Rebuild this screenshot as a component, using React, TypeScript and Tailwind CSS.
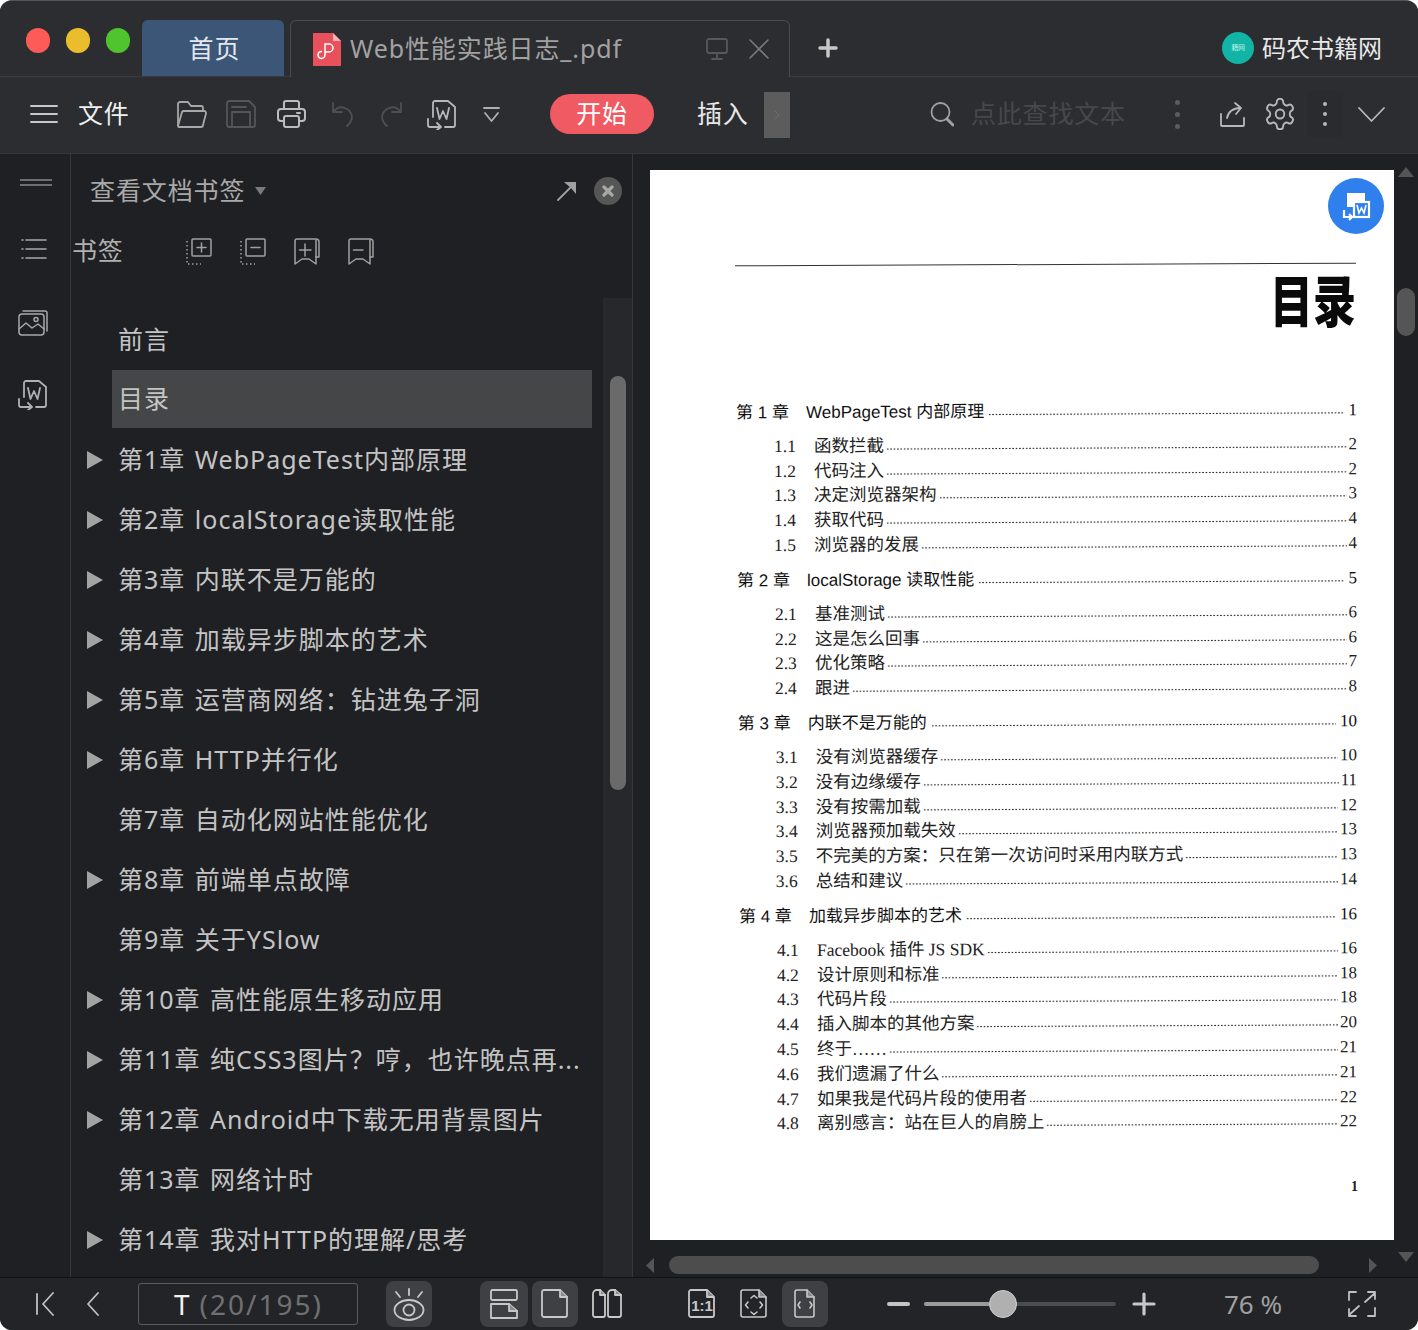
import React from "react";

const FONT = '"Noto Sans","Noto Sans CJK SC",sans-serif';

const S = ({ w, h, vb, children, c = "#b8b8b8", sw = 1.8 }: { w: number; h: number; vb?: string; children: React.ReactNode; c?: string; sw?: number }) => (
  <svg width={w} height={h} viewBox={vb ?? `0 0 ${w} ${h}`} fill="none" stroke={c} strokeWidth={sw} strokeLinecap="round" strokeLinejoin="round" className="shrink-0 block">
    {children}
  </svg>
);

const Tri = () => (
  <svg width="16" height="18" viewBox="0 0 16 18" className="shrink-0"><path d="M0 0L16 9L0 18Z" fill="#a3a3a3" /></svg>
);

const WordDoc = ({ c = "#b8b8b8" }: { c?: string }) => (
  <S w={32} h={32} c={c}>
    <path d="M7 19V5a2 2 0 0 1 2-2h13l7 6v18a2 2 0 0 1-2 2h-8" />
    <path d="M11 10l2.500 11 3.500-8 3.500 8L23 10" />
    <path d="M2 21v6a2 2 0 0 0 2 2h11M11 25l4 4-4 3" />
  </S>
);

const DocShape = ({ w, h }: { w: number; h: number }) => (
  <>
    <path d={`M1 3a2 2 0 0 1 2-2h${w - 11}l7 7v${h - 11}a2 2 0 0 1-2 2H3a2 2 0 0 1-2-2z`} />
    <path d={`M${w - 8} 1v7h7`} fill="#8a8a8a" />
  </>
);

const sections: { n: string; t: string; p: string; subs: [string, string, string][] }[] = [
  { n: "第 1 章", t: "WebPageTest 内部原理", p: "1", subs: [["1.1", "函数拦截", "2"], ["1.2", "代码注入", "2"], ["1.3", "决定浏览器架构", "3"], ["1.4", "获取代码", "4"], ["1.5", "浏览器的发展", "4"]] },
  { n: "第 2 章", t: "localStorage 读取性能", p: "5", subs: [["2.1", "基准测试", "6"], ["2.2", "这是怎么回事", "6"], ["2.3", "优化策略", "7"], ["2.4", "跟进", "8"]] },
  { n: "第 3 章", t: "内联不是万能的", p: "10", subs: [["3.1", "没有浏览器缓存", "10"], ["3.2", "没有边缘缓存", "11"], ["3.3", "没有按需加载", "12"], ["3.4", "浏览器预加载失效", "13"], ["3.5", "不完美的方案：只在第一次访问时采用内联方式", "13"], ["3.6", "总结和建议", "14"]] },
  { n: "第 4 章", t: "加载异步脚本的艺术", p: "16", subs: [["4.1", "Facebook 插件 JS SDK", "16"], ["4.2", "设计原则和标准", "18"], ["4.3", "代码片段", "18"], ["4.4", "插入脚本的其他方案", "20"], ["4.5", "终于……", "21"], ["4.6", "我们遗漏了什么", "21"], ["4.7", "如果我是代码片段的使用者", "22"], ["4.8", "离别感言：站在巨人的肩膀上", "22"]] },
];

const bookmarks: [string, boolean][] = [
  ["第1章 WebPageTest内部原理", true],
  ["第2章 localStorage读取性能", true],
  ["第3章 内联不是万能的", true],
  ["第4章 加载异步脚本的艺术", true],
  ["第5章 运营商网络：钻进兔子洞", true],
  ["第6章 HTTP并行化", true],
  ["第7章 自动化网站性能优化", false],
  ["第8章 前端单点故障", true],
  ["第9章 关于YSlow", false],
  ["第10章 高性能原生移动应用", true],
  ["第11章 纯CSS3图片？哼，也许晚点再...", true],
  ["第12章 Android中下载无用背景图片", true],
  ["第13章 网络计时", false],
  ["第14章 我对HTTP的理解/思考", true],
];

const Dots = ({ cls }: { cls: string }) => (
  <span className={`flex-1 h-[3px] bg-[radial-gradient(circle,#2a2a2a_0.8px,transparent_1.1px)] bg-[length:3.4px_3px] ${cls}`} />
);

function Toc() {
  let y = 0;
  return (
    <div className="mt-[72px] mr-[37px] skew-y-[-0.28deg]" style={{ fontFamily: '"Liberation Sans","Noto Sans CJK SC",sans-serif' }}>
      {sections.map((s, i) => {
        const rows = (
          <div key={s.n} className={i ? "mt-[10px]" : ""}>
            <div className="flex items-end h-[25px] mb-[9px] text-[17px] leading-[25px] text-[#111]" style={{ marginLeft: 86 + y * 0.0059 }}>
              <span className="w-[70px] shrink-0 whitespace-pre">{s.n}</span>
              <span className="whitespace-nowrap">{s.t}</span>
              <Dots cls="mx-[4px] mb-[8px]" />
              <span className="font-['Liberation_Serif'] text-[17px]">{s.p}</span>
            </div>
            {s.subs.map((r) => (
              <div key={r[0]} className="flex items-end h-[24.8px] text-[17.5px] leading-[25px] text-[#222]" style={{ marginLeft: 124 + y * 0.0059, fontFamily: '"Liberation Serif","Noto Sans CJK SC",serif' }}>
                <span className="w-[40px] shrink-0">{r[0]}</span>
                <span className="whitespace-nowrap">{r[1]}</span>
                <Dots cls="mx-[2px] mb-[8px]" />
                <span className="text-[17px]">{r[2]}</span>
              </div>
            ))}
          </div>
        );
        y += 34 + s.subs.length * 24.8 + 10;
        return rows;
      })}
    </div>
  );
}

export default function App() {
  return (
    <div className="w-[1418px] h-[1330px] bg-white overflow-hidden" style={{ fontFamily: FONT }}>
      <div className="w-full h-full rounded-[12px] overflow-hidden flex flex-col bg-[#1f2023] border-t border-[#55565a]">
        {/* title bar */}
        <div className="h-[76px] shrink-0 bg-[#2c2d30] flex items-end border-b border-[#3a3b3e]">
          <div className="flex items-center gap-[16px] pl-[26px] pb-[23px] w-[142px]">
            <span className="w-[24px] h-[25px] rounded-full bg-[#fc5b57]" />
            <span className="w-[24px] h-[25px] rounded-full bg-[#e9bd2b]" />
            <span className="w-[24px] h-[25px] rounded-full bg-[#4fc42f]" />
          </div>
          <div className="w-[142px] h-[56px] bg-[#3c5678] rounded-t-[6px] flex items-center justify-center pt-[2px] pl-[3px] text-[25px] tracking-[1px] text-[#e4e8ee]">首页</div>
          <div className="ml-[6px] w-[500px] h-[57px] rounded-t-[6px] border border-b-0 border-[#4a4b4e] flex items-center pl-[22px] -mb-px bg-[#2c2d30]">
            <svg width="28" height="33" viewBox="0 0 28 33" className="shrink-0">
              <path d="M0 0H20L28 8V33H0Z" fill="#e8505b" />
              <path d="M20 0L28 8H20Z" fill="#f6b3b6" />
              <path d="M12 22V11h4a4 4 0 0 1 0 8h-4M12 22a3.500 3.500 0 1 1-3-3.500" fill="none" stroke="#fff" strokeWidth="1.500" />
            </svg>
            <span className="ml-[9px] w-[356px] text-[25px] text-[#a2a2a2] whitespace-nowrap tracking-[0.9px]">Web性能实践日志_.pdf</span>
            <S w={22} h={22} c="#57585b">
              <rect x="1" y="1" width="20" height="14" rx="2" />
              <path d="M11 15v6M6 21h10" />
            </S>
            <div className="ml-[20px]">
              <S w={22} h={22} c="#77787a" sw={1.6}>
                <path d="M2 2l18 18M20 2L2 20" />
              </S>
            </div>
          </div>
          <div className="ml-[28px] pb-[18px]">
            <S w={20} h={20} c="#c8c8c8" sw={3.5}>
              <path d="M10 2v16M2 10h16" />
            </S>
          </div>
          <div className="ml-auto mr-[36px] pb-[12px] flex items-center">
            <span className="w-[32px] h-[32px] rounded-full bg-[#12b5a5] flex items-center justify-center text-[7px] text-[#bff0ea] tracking-[-0.5px]">籍网</span>
            <span className="ml-[8px] text-[24px] leading-[32px] text-[#e8e8e8] whitespace-nowrap">码农书籍网</span>
          </div>
        </div>

        {/* toolbar */}
        <div className="h-[77px] shrink-0 bg-[#2c2d30] flex items-center pb-[2px] border-b border-[#35363a] text-[25px] tracking-[0.8px]">
          <div className="ml-[30px]">
            <S w={28} h={20} c="#c8c8c8">
              <path d="M1 2h26M1 10h26M1 18h26" />
            </S>
          </div>
          <span className="ml-[20px] w-[52px] text-[#f0f0f0] whitespace-nowrap">文件</span>
          <div className="ml-[45px]">
            <S w={33} h={28} c="#a8a8a8">
              <path d="M3 25V4a2 2 0 0 1 2-2h8l3 4h10a2 2 0 0 1 2 2v3" />
              <path d="M3 26l4-14a2 2 0 0 1 2-1h20a2 2 0 0 1 2 2.500L28 25a2 2 0 0 1-2 2H4a1 1 0 0 1-1-1z" />
            </S>
          </div>
          <div className="ml-[17px]">
            <S w={32} h={30} c="#55565a">
              <path d="M2 26V4a2 2 0 0 1 2-2h20l6 6v18a2 2 0 0 1-2 2H4a2 2 0 0 1-2-2z" />
              <path d="M7 28V13h18v15M7 8h14" />
            </S>
          </div>
          <div className="ml-[20px]">
            <S w={29} h={28} c="#bcbcbc" sw={2}>
              <path d="M7 9V3a2 2 0 0 1 2-2h11a2 2 0 0 1 2 2v6" />
              <path d="M7 21H4a3 3 0 0 1-3-3v-6a3 3 0 0 1 3-3h21a3 3 0 0 1 3 3v6a3 3 0 0 1-3 3h-3" />
              <rect x="7" y="16" width="15" height="11" rx="2" />
              <path d="M20 13h3" />
            </S>
          </div>
          <div className="ml-[25px]">
            <S w={24} h={26} c="#4e4f52">
              <path d="M2 2v9h9M2 11c4-5 9-6 14-3 6 4 7 11 0 17" />
            </S>
          </div>
          <div className="ml-[24px]">
            <S w={24} h={26} c="#4e4f52">
              <path d="M22 2v9h-9M22 11c-4-5-9-6-14-3-6 4-7 11 0 17" />
            </S>
          </div>
          <div className="ml-[23px]">
            <WordDoc />
          </div>
          <div className="ml-[25px]">
            <S w={17} h={17} c="#b0b0b0">
              <path d="M1 2h15M2 7l6.500 8L15 7" />
            </S>
          </div>
          <div className="ml-[50px] w-[104px] h-[40px] rounded-full bg-[#f05a62] flex items-center justify-center text-[#fff]">开始</div>
          <span className="ml-[43px] w-[51px] text-[#e8e8e8] whitespace-nowrap">插入</span>
          <div className="ml-[16px] mt-[2px] w-[26px] h-[46px] bg-[#5c5c5c] flex items-center justify-center">
            <S w={6} h={10} c="#6e6e6e" sw={1}>
              <path d="M1 1l4 4-4 4" />
            </S>
          </div>
          <div className="ml-[140px]">
            <S w={24} h={26} c="#a0a0a0">
              <circle cx="10.500" cy="11" r="9" />
              <path d="M17 18l6 6" strokeWidth="3" />
            </S>
          </div>
          <span className="ml-[17px] w-[155px] text-[#47484b] whitespace-nowrap">点此查找文本</span>
          <div className="ml-[48px] w-[6px] flex flex-col gap-[7px] items-center">
            <span className="w-[5px] h-[5px] rounded-full bg-[#5b5c5e]" />
            <span className="w-[5px] h-[5px] rounded-full bg-[#5b5c5e]" />
            <span className="w-[5px] h-[5px] rounded-full bg-[#5b5c5e]" />
          </div>
          <div className="ml-[40px]">
            <S w={26} h={26} c="#b8b8b8">
              <path d="M1 13v11a1 1 0 0 0 1 1h21a1 1 0 0 0 1-1v-7" />
              <path d="M7 17c1-6 6-10 13-10M15 2l6 5-5 6" />
            </S>
          </div>
          <div className="ml-[19px]">
            <svg width="30" height="32" viewBox="1.5 1.5 21 21" preserveAspectRatio="none" fill="none" stroke="#b8b8b8" strokeWidth="1.300" strokeLinejoin="round" className="shrink-0 block">
              <path d="M12.220 2h-.44a2 2 0 0 0-2 2v.18a2 2 0 0 1-1 1.730l-.43.25a2 2 0 0 1-2 0l-.15-.08a2 2 0 0 0-2.730.73l-.22.380a2 2 0 0 0 .73 2.730l.15.1a2 2 0 0 1 1 1.720v.51a2 2 0 0 1-1 1.740l-.15.09a2 2 0 0 0-.73 2.730l.22.380a2 2 0 0 0 2.730.73l.15-.08a2 2 0 0 1 2 0l.43.25a2 2 0 0 1 1 1.730V20a2 2 0 0 0 2 2h.44a2 2 0 0 0 2-2v-.18a2 2 0 0 1 1-1.730l.43-.25a2 2 0 0 1 2 0l.15.08a2 2 0 0 0 2.730-.73l.22-.390a2 2 0 0 0-.73-2.730l-.15-.08a2 2 0 0 1-1-1.740v-.5a2 2 0 0 1 1-1.740l.15-.09a2 2 0 0 0 .73-2.730l-.22-.380a2 2 0 0 0-2.730-.73l-.15.08a2 2 0 0 1-2 0l-.43-.25a2 2 0 0 1-1-1.730V4a2 2 0 0 0-2-2z" />
              <circle cx="12" cy="12" r="3" />
            </svg>
          </div>
          <div className="ml-[12px] w-[36px] h-[46px] rounded-[4px] bg-[#2a2b2e] flex flex-col gap-[6px] items-center justify-center">
            <span className="w-[4px] h-[4px] rounded-full bg-[#b8b8b8]" />
            <span className="w-[4px] h-[4px] rounded-full bg-[#b8b8b8]" />
            <span className="w-[4px] h-[4px] rounded-full bg-[#b8b8b8]" />
          </div>
          <div className="ml-[15px]">
            <S w={27} h={15} c="#b8b8b8">
              <path d="M1 1l12.500 13L26 1" />
            </S>
          </div>
        </div>

        {/* body */}
        <div className="flex-1 min-h-0 flex bg-[#1f2023]">
          {/* left rail */}
          <div className="w-[71px] shrink-0 border-r border-[#36373a] flex flex-col items-center">
            <div className="mt-[26px] ml-[1px] w-[32px] flex flex-col gap-[3px] -translate-y-px">
              <span className="h-[2px] bg-[#6e6e6e]" />
              <span className="h-[2px] bg-[#6e6e6e]" />
            </div>
            <div className="mt-[51px] -ml-[2px]">
              <S w={26} h={22} c="#a8a8a8" sw={1.6}>
                <path d="M5 2h20M5 11h20M5 20h20M1 2h1M1 11h1M1 20h1" />
              </S>
            </div>
            <div className="mt-[50px] -ml-[4px]">
              <S w={30} h={26} c="#a8a8a8" sw={1.5}>
                <path d="M5 1h22a2 2 0 0 1 2 2v18" />
                <rect x="1" y="4" width="25" height="21" rx="3" />
                <path d="M1 19l7-6 6 5 6-4 6 5" />
                <circle cx="18" cy="9.500" r="2" />
              </S>
            </div>
            <div className="mt-[42px] -ml-[5px]">
              <WordDoc c="#b0b0b0" />
            </div>
          </div>

          {/* bookmarks */}
          <div className="w-[562px] shrink-0 border-r border-[#36373a] flex flex-col">
            <div className="h-[74px] shrink-0 flex items-center text-[25px] tracking-[0.9px] text-[#a8a8a8]">
              <span className="ml-[19px] w-[155px] whitespace-nowrap">查看文档书签</span>
              <svg width="11" height="9" viewBox="0 0 11 9" className="ml-[10px]"><path d="M0 0H11L5.500 8Z" fill="#7a7a7a" /></svg>
              <div className="ml-auto mr-[17px]">
                <S w={20} h={20} c="#a0a0a0">
                  <path d="M1 19L18 2" />
                  <path d="M7 1h12v12L14 7z" fill="#a0a0a0" stroke="none" />
                </S>
              </div>
              <div className="mr-[10px] w-[28px] h-[28px] rounded-full bg-[#565656] flex items-center justify-center">
                <S w={12} h={12} c="#a8a8a8" sw={3.2}>
                  <path d="M2 2l8 8M10 2l-8 8" />
                </S>
              </div>
            </div>
            <div className="h-[46px] shrink-0 flex items-center text-[25px] tracking-[0.8px] text-[#b0b0b0]">
              <span className="ml-[1px] w-[52px] whitespace-nowrap">书签</span>
              <div className="ml-[62px]">
                <S w={26} h={27} sw={1.5} c="#a0a0a0">
                  <rect x="6" y="1" width="19" height="17" rx="1" />
                  <path d="M15.500 5v9M11 9.500h9" />
                  <path d="M1 3v23h14" strokeDasharray="1.500 2.500" strokeLinecap="butt" />
                </S>
              </div>
              <div className="ml-[28px]">
                <S w={26} h={27} sw={1.5} c="#a0a0a0">
                  <rect x="6" y="1" width="19" height="17" rx="1" />
                  <path d="M11 9.500h9" />
                  <path d="M1 3v23h14" strokeDasharray="1.500 2.500" strokeLinecap="butt" />
                </S>
              </div>
              <div className="ml-[28px]">
                <S w={26} h={27} sw={1.5} c="#a0a0a0">
                  <path d="M1 3a2 2 0 0 1 2-2h19a3 3 0 0 1 3 3v15h-3V26l-7-5-7 0-7 5z" />
                  <path d="M11 6v12M5.500 12H17M22 2v17" />
                </S>
              </div>
              <div className="ml-[28px]">
                <S w={26} h={27} sw={1.5} c="#a0a0a0">
                  <path d="M1 3a2 2 0 0 1 2-2h19a3 3 0 0 1 3 3v15h-3V26l-7-5-7 0-7 5z" />
                  <path d="M5.500 12H15M22 2v17" />
                </S>
              </div>
            </div>
            <div className="flex-1 min-h-0 flex mt-[24px]">
              <div className="w-[532px] shrink-0 overflow-hidden pt-[12px] text-[25px] tracking-[1px] [word-spacing:2px] text-[#c4c4c4]">
                <div className="h-[60px] flex items-center pl-[47px]">前言</div>
                <div className="h-[60px] flex items-center ml-[41px] w-[480px]">
                  <div className="w-full h-[58px] -mt-[2px] bg-[#454648] pl-[6px] flex items-center">目录</div>
                </div>
                {bookmarks.map(([t, arrow]) => (
                  <div key={t} className="h-[60px] flex items-center pl-[16px] whitespace-nowrap">
                    <span className="w-[31px] shrink-0">{arrow && <Tri />}</span>
                    <span>{t}</span>
                  </div>
                ))}
              </div>
              <div className="flex-1 bg-[#27282b] pl-[7px] pt-[78px]">
                <div className="w-[16px] h-[414px] rounded-full bg-[#6a6a6a]" />
              </div>
            </div>
          </div>

          {/* document */}
          <div className="flex-1 min-w-0 flex">
            <div className="w-[761px] shrink-0 flex flex-col">
              <div className="flex-1 min-h-0 pl-[17px] pt-[16px]">
                <div className="relative w-[744px] h-[1070px] bg-white overflow-hidden">
                  <div className="mt-[94px] ml-[85px] mr-[38px] h-0 border-t-[1.5px] border-[#333] -rotate-[0.25deg]" />
                  <div className="mt-[2px] mr-[38px] h-[60px] text-right text-[43px] leading-[60px] font-black text-[#0a0a0a] scale-y-[1.3] origin-center" style={{ fontFamily: '"Noto Sans CJK SC",sans-serif' }}>目录</div>
                  <Toc />
                  <div className="absolute right-[36px] top-[1006px] text-[14px] font-bold text-[#222] font-['Liberation_Serif']">1</div>
                  <div className="absolute right-[10px] top-[8px] w-[56px] h-[56px] rounded-full bg-[#2f80ed] flex items-center justify-center">
                    <svg width="32" height="32" viewBox="0 0 32 32" fill="none" stroke="#fff" strokeWidth="2.200">
                      <path d="M7 3h18v8H13v6H7z" fill="#fff" stroke="none" />
                      <rect x="14" y="12" width="15" height="15" />
                      <path d="M17 15l2 8 2.500-5 2.500 5 2-8" strokeWidth="1.600" />
                      <path d="M4 20v7h8M9 24l3 3-3 3" />
                    </svg>
                  </div>
                </div>
              </div>
              <div className="h-[21px] shrink-0 flex items-start">
                <svg width="8" height="15" viewBox="0 0 8 15" className="ml-[13px] mt-[2px]"><path d="M8 0V15L0 7.500Z" fill="#555" /></svg>
                <div className="ml-[15px] w-[650px] h-[18px] rounded-full bg-[#4d4d4d]" />
                <svg width="8" height="15" viewBox="0 0 8 15" className="ml-[50px] mt-[2px]"><path d="M0 0V15L8 7.500Z" fill="#555" /></svg>
              </div>
            </div>
            <div className="flex-1 flex flex-col items-center">
              <svg width="16" height="10" viewBox="0 0 16 10" className="mt-[13px]"><path d="M0 10L8 0L16 10Z" fill="#555" /></svg>
              <div className="mt-[111px] w-[18px] h-[48px] rounded-full bg-[#555]" />
              <svg width="16" height="10" viewBox="0 0 16 10" className="mt-auto mb-[15px]"><path d="M0 0H16L8 10Z" fill="#555" /></svg>
            </div>
          </div>
        </div>

        {/* status bar */}
        <div className="h-[53px] shrink-0 bg-[#232427] border-t border-[#111214] flex items-center">
          <div className="ml-[36px]">
            <S w={18} h={24} c="#c0c0c0">
              <path d="M1 2v20M17 1L7 12l10 11" />
            </S>
          </div>
          <div className="ml-[34px] -translate-x-[2px]">
            <S w={13} h={24} c="#c0c0c0">
              <path d="M12 1L2 12l10 11" />
            </S>
          </div>
          <div className="ml-[37px] w-[220px] h-[42px] rounded-[3px] border border-[#5a5b5e] flex items-center pl-[35px] text-[28px] tracking-[2px] whitespace-nowrap">
            <span className="text-[#f2f2f2]">T</span>
            <span className="ml-[8px] text-[#707070]">(20/195)</span>
          </div>
          <div className="ml-[28px] w-[46px] h-[46px] rounded-[8px] bg-[#3f4043] flex items-center justify-center">
            <S w={34} h={34} c="#c8c8c8">
              <ellipse cx="17" cy="23" rx="14.500" ry="10" />
              <circle cx="17" cy="23" r="5.500" />
              <path d="M17 2v6M4 5l4 5M30 5l-4 5" />
            </S>
          </div>
          <div className="ml-[48px] w-[48px] h-[46px] rounded-[8px] bg-[#3f4043] flex items-center justify-center">
            <S w={28} h={30} c="#c8c8c8">
              <rect x="1" y="1" width="26" height="10" rx="1.500" />
              <path d="M1 15h18l8 7v7H1z" />
              <path d="M19 15v7h8" fill="#8a8a8a" />
            </S>
          </div>
          <div className="ml-[4px] w-[46px] h-[46px] rounded-[8px] bg-[#3f4043] flex items-center justify-center">
            <S w={28} h={30} c="#c8c8c8">
              <DocShape w={27} h={29} />
            </S>
          </div>
          <div className="ml-[14px]">
            <S w={30} h={30} c="#c8c8c8">
              <path d="M1 5a4 4 0 0 1 4-4h3l5 5v20a2 2 0 0 1-2 2H3a2 2 0 0 1-2-2z" />
              <path d="M8 1v5h5" fill="#8a8a8a" />
              <path d="M16 5a4 4 0 0 1 4-4h3l6 5v20a2 2 0 0 1-2 2h-9a2 2 0 0 1-2-2z" />
              <path d="M23 1v5h6" fill="#8a8a8a" />
            </S>
          </div>
          <div className="ml-[66px]">
            <svg width="28" height="30" viewBox="0 0 28 30" fill="none" stroke="#c8c8c8" strokeWidth="1.800" strokeLinejoin="round" className="block">
              <DocShape w={27} h={29} />
              <text x="14" y="22" textAnchor="middle" fontFamily="Liberation Sans" fontWeight="700" fontSize="15" fill="#c8c8c8" stroke="none">1:1</text>
            </svg>
          </div>
          <div className="ml-[24px]">
            <S w={28} h={30} c="#c8c8c8" sw={1.6}>
              <DocShape w={27} h={29} />
              <path d="M11 9l3-2.500L17 9M11 23l3 2.500 3-2.500M8 13l-2.500 3L8 19M20 13l2.500 3-2.500 3" />
            </S>
          </div>
          <div className="ml-[14px] w-[46px] h-[46px] rounded-[8px] bg-[#3f4043] flex items-center justify-center">
            <S w={22} h={30} c="#c8c8c8" sw={1.6}>
              <DocShape w={21} h={29} />
              <path d="M6 13l-2 3 2 3M16 13l2 3-2 3" />
            </S>
          </div>
          <span className="ml-[59px] w-[23px] h-[4px] rounded-full bg-[#c4c4c4]" />
          <div className="ml-[14px] w-[192px] h-[4px] rounded-full bg-[#4b4c4e] flex items-center">
            <span className="w-[65px] h-[4px] rounded-l-full bg-[#9a9a9a]" />
            <span className="w-[28px] h-[28px] shrink-0 rounded-full bg-[#b0b0b0] border border-[#d0d0d0]" />
          </div>
          <div className="ml-[16px]">
            <S w={24} h={24} c="#c8c8c8" sw={3.2}>
              <path d="M12 2v20M2 12h20" />
            </S>
          </div>
          <span className="ml-[68px] w-[60px] text-[26px] text-[#a0a0a0] whitespace-nowrap">76 %</span>
          <div className="ml-[64px]">
            <S w={28} h={28} c="#c0c0c0" sw={1.8}>
              <path d="M1 10V2h7M27 18v8h-7M20 2h7v1L17 12M8 26H1v-1l10-9M27 2v7M1 26v-7" />
            </S>
          </div>
        </div>
      </div>
    </div>
  );
}
